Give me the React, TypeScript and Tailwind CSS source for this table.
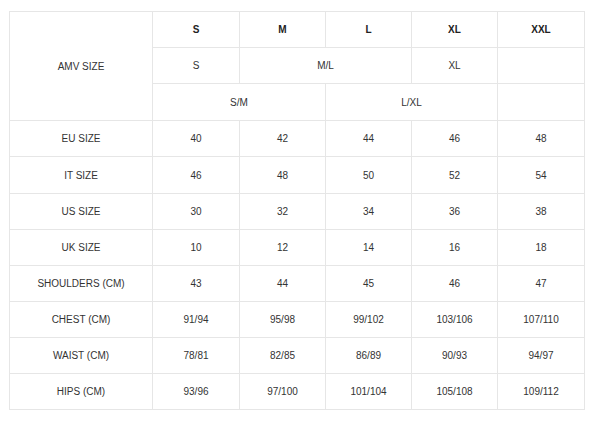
import React from 'react';

const ROWS = [
  { label: 'EU SIZE', values: ['40', '42', '44', '46', '48'] },
  { label: 'IT SIZE', values: ['46', '48', '50', '52', '54'] },
  { label: 'US SIZE', values: ['30', '32', '34', '36', '38'] },
  { label: 'UK SIZE', values: ['10', '12', '14', '16', '18'] },
  { label: 'SHOULDERS (CM)', values: ['43', '44', '45', '46', '47'] },
  { label: 'CHEST (CM)', values: ['91/94', '95/98', '99/102', '103/106', '107/110'] },
  { label: 'WAIST (CM)', values: ['78/81', '82/85', '86/89', '90/93', '94/97'] },
  { label: 'HIPS (CM)', values: ['93/96', '97/100', '101/104', '105/108', '109/112'] },
];

const cell = 'border border-[#e6e6e6] text-center align-middle p-0';

export default function App() {
  return (
    <div className="w-[600px] h-[425px] bg-white pt-[11px] pl-[9px]" style={{ fontFamily: '"Liberation Sans", Arial, sans-serif' }}>
      <table className="border-collapse table-fixed w-[576px] text-[10px] text-[#333]">
        <colgroup>
          <col className="w-[143px]" />
          <col className="w-[87px]" />
          <col className="w-[86px]" />
          <col className="w-[86px]" />
          <col className="w-[86px]" />
          <col className="w-[87px]" />
        </colgroup>
        <tbody>
          <tr className="h-[36px]">
            <td rowSpan={3} className={cell}>AMV SIZE</td>
            {['S', 'M', 'L', 'XL', 'XXL'].map((s) => (
              <td key={s} className={`${cell} font-bold text-[#222]`}>{s}</td>
            ))}
          </tr>
          <tr className="h-[36px]">
            <td className={cell}>S</td>
            <td colSpan={2} className={cell}>M/L</td>
            <td className={cell}>XL</td>
            <td className={cell}></td>
          </tr>
          <tr className="h-[37px]">
            <td colSpan={2} className={cell}>S/M</td>
            <td colSpan={2} className={cell}>L/XL</td>
            <td className={cell}></td>
          </tr>
          {ROWS.map((r, idx) => (
            <tr key={r.label} className={idx === 1 ? 'h-[37px]' : 'h-[36px]'}>
              <td className={cell}>{r.label}</td>
              {r.values.map((v, i) => (
                <td key={i} className={cell}>{v}</td>
              ))}
            </tr>
          ))}
        </tbody>
      </table>
    </div>
  );
}
